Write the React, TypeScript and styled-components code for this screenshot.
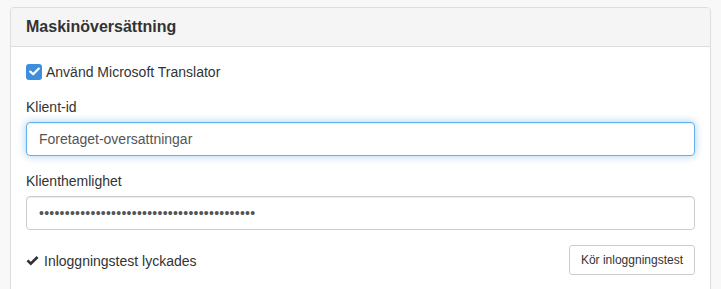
import React from "react";
import styled, { createGlobalStyle } from "styled-components";

const Global = createGlobalStyle`
  html, body { margin: 0; padding: 0; background: #f8f8f8; }
  body {
    font-family: "Liberation Sans", Arial, Helvetica, sans-serif;
    font-size: 14px;
    line-height: 20px;
    color: #333;
  }
  * { box-sizing: border-box; }
`;

const Page = styled.div`
  padding: 7px 10px 10px 10px;
`;

const Panel = styled.section`
  background: #fff;
  border: 1px solid #ddd;
  border-radius: 4px;
  box-shadow: 0 1px 1px rgba(0, 0, 0, 0.05);
  overflow: hidden;
`;

const PanelHeading = styled.header`
  background: #f5f5f5;
  border-bottom: 1px solid #ddd;
  padding: 10px 15px;
`;

const PanelTitle = styled.h3`
  margin: 0;
  font-size: 16px;
  line-height: 17.6px;
  font-weight: bold;
  color: #333;
`;

const PanelBody = styled.div`
  padding: 15px 15px 20px 15px;
  display: flex;
  flex-direction: column;
  gap: 15px;
`;

const CheckRow = styled.label`
  display: flex;
  align-items: center;
  gap: 4px;
  height: 20px;
  cursor: pointer;
`;

const CheckBox = styled.span`
  width: 16px;
  height: 16px;
  border-radius: 3px;
  background: #3e8ede;
  display: inline-flex;
  align-items: center;
  justify-content: center;
`;

const Field = styled.div`
  display: flex;
  flex-direction: column;
  gap: 5px;
`;

const Label = styled.label`
  font-size: 14px;
  line-height: 20px;
  color: #333;
`;

const Input = styled.input<{ $focused?: boolean }>`
  display: block;
  width: 100%;
  height: 34px;
  padding: 6px 12px;
  font-family: "Liberation Sans", Arial, Helvetica, sans-serif;
  font-size: 14px;
  line-height: 20px;
  color: #555;
  background: #fff;
  border: 1px solid ${(p) => (p.$focused ? "#66afe9" : "#ccc")};
  border-radius: 4px;
  outline: none;
  box-shadow: ${(p) =>
    p.$focused
      ? "inset 0 1px 1px rgba(0,0,0,.075), 0 0 8px rgba(102,175,233,.6)"
      : "inset 0 1px 1px rgba(0,0,0,.075)"};
`;

const Password = styled(Input)`
  letter-spacing: 0.25px;
`;

const Footer = styled.div`
  display: flex;
  align-items: center;
  justify-content: space-between;
`;

const Status = styled.div`
  display: flex;
  align-items: center;
  gap: 5px;
  padding-top: 3px;
  font-size: 14px;
  color: #333;
`;

const Button = styled.button`
  font-family: "Liberation Sans", Arial, Helvetica, sans-serif;
  font-size: 12px;
  line-height: 18px;
  padding: 5px 11px;
  color: #333;
  background: #fff;
  border: 1px solid #ccc;
  border-radius: 3px;
  cursor: pointer;
`;

export default function App() {
  return (
    <Page>
      <Global />
      <Panel>
        <PanelHeading>
          <PanelTitle>Maskinöversättning</PanelTitle>
        </PanelHeading>
        <PanelBody>
          <CheckRow>
            <CheckBox>
              <svg width="11" height="9" viewBox="0 0 11 9">
                <path d="M1.3 4.6 L4.2 7.3 L9.8 1.6" fill="none" stroke="#fff" strokeWidth="2.2" strokeLinecap="round" strokeLinejoin="round" />
              </svg>
            </CheckBox>
            Använd Microsoft Translator
          </CheckRow>
          <Field>
            <Label htmlFor="klient-id">Klient-id</Label>
            <Input id="klient-id" $focused defaultValue="Foretaget-oversattningar" />
          </Field>
          <Field>
            <Label htmlFor="klient-secret">Klienthemlighet</Label>
            <Password id="klient-secret" type="password" defaultValue={"x".repeat(42)} />
          </Field>
          <Footer>
            <Status>
              <svg width="13" height="10" viewBox="0 0 13 10">
                <path d="M0.5 5.3 L2.4 3.4 L4.8 5.8 L10.6 0 L12.5 1.9 L4.8 9.6 Z" fill="#333" />
              </svg>
              Inloggningstest lyckades
            </Status>
            <Button type="button">Kör inloggningstest</Button>
          </Footer>
        </PanelBody>
      </Panel>
    </Page>
  );
}
